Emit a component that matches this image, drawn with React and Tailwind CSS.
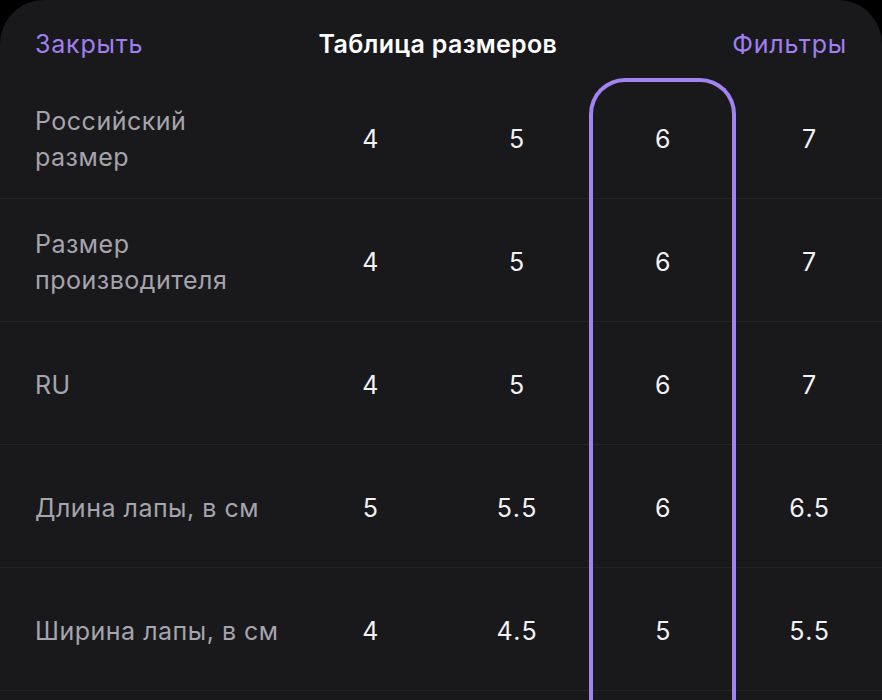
const ROWS = [
  { label: ["Российский", "размер"], values: ["4", "5", "6", "7"] },
  { label: ["Размер", "производителя"], values: ["4", "5", "6", "7"] },
  { label: ["RU"], values: ["4", "5", "6", "7"] },
  { label: ["Длина лапы, в см"], values: ["5", "5.5", "6", "6.5"] },
  { label: ["Ширина лапы, в см"], values: ["4", "4.5", "5", "5.5"] },
  { label: [], values: [] },
];

export default function App() {
  return (
    <div
      className="h-[700px] w-[882px] overflow-hidden bg-black"
      style={{ fontFamily: "Inter, 'Noto Sans', sans-serif" }}
    >
      <div className="h-full rounded-t-[44px] bg-[#19191c]">
        {/* header */}
        <div className="flex h-[76px] items-start justify-between px-[35px] pt-[28px] text-[25px] leading-[32px]">
          <button className="tracking-[0.8px] text-[#a07ff0]">Закрыть</button>
          <h1 className="font-semibold tracking-[0.3px] text-white">Таблица размеров</h1>
          <button className="tracking-[0.8px] text-[#a07ff0]">Фильтры</button>
        </div>

        {/* table */}
        <div className="relative">
          <div className="pointer-events-none absolute left-[589px] top-[2px] h-[720px] w-[147px] rounded-t-[36px] border-4 border-b-0 border-[#a383f2]" />
          {ROWS.map((row, i) => (
            <div
              key={i}
              className="grid h-[123px] grid-cols-[297px_repeat(4,1fr)] items-center border-b border-[#242328] pt-[4px] text-[25px] leading-[36px]"
            >
              <div className="pl-[35px] tracking-[0.5px] text-[#a6a4ad]">
                {row.label.map((l) => (
                  <div key={l}>{l}</div>
                ))}
              </div>
              {row.values.map((v, j) => (
                <div key={j} className="pl-[2px] text-center tracking-[1.5px] text-[#f2f2f4]">
                  {v}
                </div>
              ))}
            </div>
          ))}
        </div>
      </div>
    </div>
  );
}
